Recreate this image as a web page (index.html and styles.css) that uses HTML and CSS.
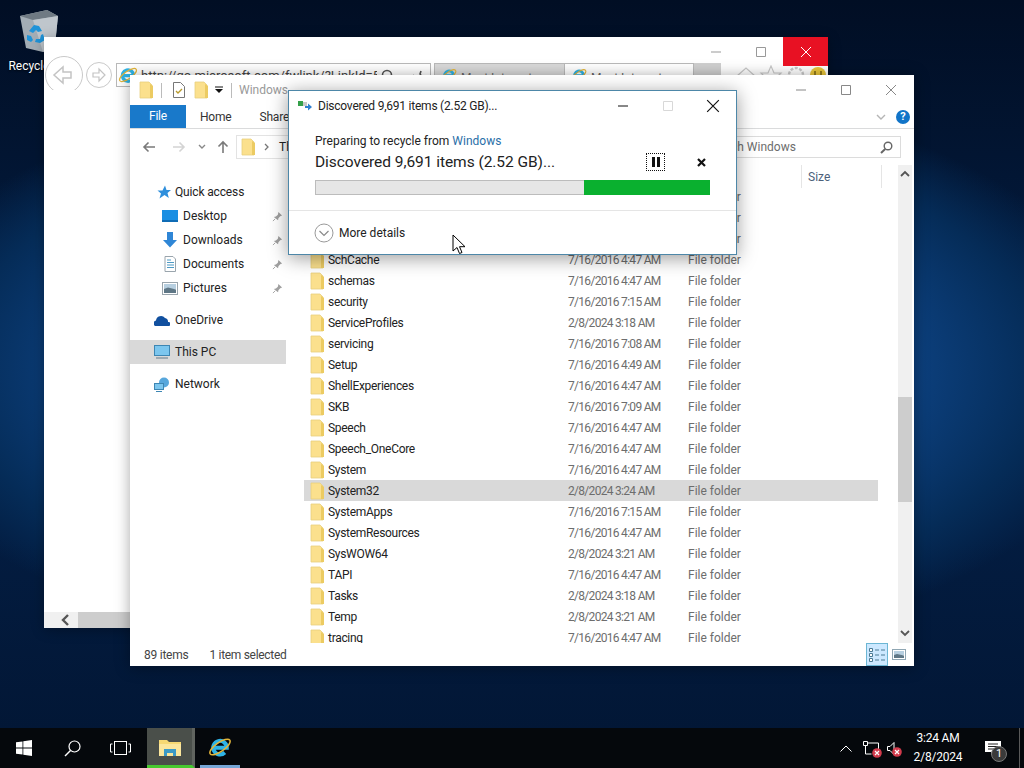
FILE: index.html
```html
<!DOCTYPE html>
<html lang="en">
<head>
    <meta charset="UTF-8">
    <title>Discovered 9,691 items (2.52 GB)...</title>
    <link rel="stylesheet" href="styles.css">
</head>
<body>
    <!-- shared icons -->
    <svg class="defs" width="0" height="0">
        <symbol id="i-folder" viewBox="0 0 16 18">
            <path d="M1 1h9l3 3v13H1z" fill="#fbe08d" stroke="#e9cf7e" stroke-width=".8"/>
            <path d="M11 3l3 2v12h-3z" fill="#eccb62"/>
        </symbol>
        <symbol id="i-min" viewBox="0 0 12 12"><path d="M1 6h10" stroke="currentColor" fill="none"/></symbol>
        <symbol id="i-max" viewBox="0 0 12 12"><path d="M1.5 1.5h9v9h-9z" stroke="currentColor" fill="none"/></symbol>
        <symbol id="i-close" viewBox="0 0 12 12"><path d="M1 1l10 10M11 1L1 11" stroke="currentColor" fill="none"/></symbol>
        <symbol id="i-pin" viewBox="0 0 12 12">
            <path d="M7 1l4 4-2 .6-2 2.2-.4 2.4L2 6.600l2.300-.5L6.400 4z" fill="#a0a0a0"/>
            <path d="M3.500 8.500L1 11" stroke="#a0a0a0"/>
        </symbol>
        <symbol id="i-ie" viewBox="0 0 24 24">
            <path d="M6 12.800H18.800A6.800 6.800 0 1 0 16.800 17.500" fill="none" stroke="#2eb3e6" stroke-width="4"/>
            <ellipse cx="12" cy="12" rx="12" ry="4.500" transform="rotate(-35 12 12)" fill="none" stroke="#e3b53a" stroke-width="1.500"/>
        </symbol>
        <symbol id="i-xbadge" viewBox="0 0 10 10">
            <circle cx="5" cy="5" r="4.800" fill="#d23a4c"/>
            <path d="M3 3l4 4M7 3L3 7" stroke="#fff" stroke-width="1.200"/>
        </symbol>
    </svg>

    <div class="desktop">
        <div class="desktop-icon">
            <svg width="40" height="44" viewBox="0 0 40 44">
                <path d="M1 7L28 1l11 6-3 29-12 7-17-4z" fill="#a3adb5"/>
                <path d="M1 7L28 1l11 6-25 4z" fill="#6f7a83"/>
                <path d="M14 11l25-4-3 29-12 7z" fill="#bfc6cc"/>
                <path d="M10 22l5-6 5 1 3 5-4 1-2-2-3 3zM24 25l2 6-5 3-5-1 1-3 4 0 1-4zM8 26l4 1 2 4-2 2-4-2z" fill="#1f93d8"/>
            </svg>
            <span>Recycle Bin</span>
        </div>

        <!-- Internet Explorer behind everything -->
        <div class="window ie-window">
            <div class="ie-title">
                <div class="win-ctrls">
                    <span class="ctrl"><svg width="12" height="12"><use href="#i-min"/></svg></span>
                    <span class="ctrl"><svg width="12" height="12"><use href="#i-max"/></svg></span>
                    <span class="ctrl ctrl-close"><svg width="12" height="12"><use href="#i-close"/></svg></span>
                </div>
            </div>
            <div class="ie-toolbar">
                <span class="ie-back">
                    <svg width="38" height="38" viewBox="0 0 38 38"><circle cx="19" cy="19" r="18.500" fill="#fff" stroke="#c9c9c9"/><path d="M26 16h-8v-5l-9 8 9 8v-5h8z" fill="#fff" stroke="#c4c4c4" stroke-width="1.500"/></svg>
                </span>
                <span class="ie-fwd">
                    <svg width="26" height="26" viewBox="0 0 26 26"><circle cx="13" cy="13" r="12.500" fill="#fff" stroke="#c9c9c9"/><path d="M7 11h6V7l6 6-6 6v-4H7z" fill="#fff" stroke="#c4c4c4" stroke-width="1.200"/></svg>
                </span>
                <div class="ie-address">
                    <svg width="20" height="20"><use href="#i-ie"/></svg>
                    <span class="ie-url">http://go.microsoft.com/fwlink/?LinkId=517</span>
                    <svg class="ie-addr-tools" width="46" height="14" viewBox="0 0 46 14"><circle cx="7" cy="7" r="4.500" fill="none" stroke="#555" stroke-width="1.600"/><path d="M19 8h5" stroke="#777"/><path d="M34 7a4 4 0 1 0 6-1l1-3" fill="none" stroke="#555" stroke-width="1.600"/></svg>
                </div>
                <div class="ie-tab ie-tab-back">
                    <svg width="16" height="16"><use href="#i-ie"/></svg><span class="ie-tab-text">Meet Internet</span>
                </div>
                <div class="ie-tab">
                    <svg width="16" height="16"><use href="#i-ie"/></svg><span class="ie-tab-text">Meet Internet</span>
                </div>
                <div class="ie-newtab"></div>
                <svg class="ie-tools" width="92" height="20" viewBox="0 0 92 20">
                    <path d="M2 11l9-8 9 8v8H2z" fill="none" stroke="#c8c8c8" stroke-width="1.200"/>
                    <path d="M36 1l3 7h7l-5 5 2 7-7-4-7 4 2-7-5-5h7z" fill="none" stroke="#c8c8c8" stroke-width="1.200"/>
                    <circle cx="61" cy="10" r="7" fill="none" stroke="#c8c8c8" stroke-width="2.400" stroke-dasharray="3 1.500"/>
                    <circle cx="83" cy="10" r="8" fill="#e8c53a"/>
                    <path d="M80 6v4M86 6v4" stroke="#7a6410" stroke-width="1.500"/>
                </svg>
            </div>
            <div class="ie-hscroll">
                <svg width="10" height="12" viewBox="0 0 10 12"><path d="M8 1L3 6l5 5" fill="none" stroke="#555" stroke-width="2.400"/></svg>
                <span class="ie-hthumb"></span>
            </div>
        </div>

        <!-- File Explorer -->
        <div class="window explorer">
            <div class="ex-title">
                <svg class="qa-folder" width="16" height="18"><use href="#i-folder"/></svg>
                <span class="qa-sep"></span>
                <svg class="qa-doc" width="14" height="16" viewBox="0 0 14 16"><path d="M1.500.5h7l4 4v11h-11z" fill="#fff" stroke="#777"/><path d="M4 9l2 2 4-4" fill="none" stroke="#b89a2c" stroke-width="1.300"/></svg>
                <svg class="qa-folder-2" width="16" height="18"><use href="#i-folder"/></svg>
                <svg class="qa-drop" width="8" height="8" viewBox="0 0 8 8"><path d="M0 1h8" stroke="#111"/><path d="M0 3h8L4 7z" fill="#111"/></svg>
                <span class="qa-sep qa-sep-last"></span>
                <span class="ex-name">Windows</span>
                <div class="win-ctrls ex-ctrls">
                    <span class="ctrl"><svg width="12" height="12"><use href="#i-min"/></svg></span>
                    <span class="ctrl"><svg width="12" height="12"><use href="#i-max"/></svg></span>
                    <span class="ctrl"><svg width="12" height="12"><use href="#i-close"/></svg></span>
                </div>
            </div>
            <div class="ex-tabs">
                <span class="tab tab-file">File</span>
                <span class="tab">Home</span>
                <span class="tab">Share</span>
                <svg class="ribbon-chev" width="10" height="6" viewBox="0 0 10 6"><path d="M1 1l4 4 4-4" fill="none" stroke="#b5b5b5" stroke-width="1.400"/></svg>
                <span class="help">?</span>
            </div>
            <div class="ex-address">
                <svg class="nav-btn" width="14" height="12" viewBox="0 0 14 12"><path d="M13 6H2M6.500 1.500L2 6l4.500 4.500" fill="none" stroke="#7a7a7a" stroke-width="1.600"/></svg>
                <svg class="nav-btn nav-fwd" width="14" height="12" viewBox="0 0 14 12"><path d="M1 6h11M7.500 1.500L12 6l-4.500 4.500" fill="none" stroke="#d4d4d4" stroke-width="1.600"/></svg>
                <svg class="nav-btn nav-drop" width="8" height="6" viewBox="0 0 8 6"><path d="M1 1l3 3 3-3" fill="none" stroke="#888" stroke-width="1.400"/></svg>
                <svg class="nav-btn nav-up" width="12" height="14" viewBox="0 0 12 14"><path d="M6 13V2M1.500 6.500L6 2l4.500 4.500" fill="none" stroke="#7a7a7a" stroke-width="1.600"/></svg>
                <div class="path-box">
                    <svg width="16" height="18"><use href="#i-folder"/></svg>
                    <svg class="path-chev" width="6" height="8" viewBox="0 0 6 8"><path d="M1 1l3 3-3 3" fill="none" stroke="#777" stroke-width="1.300"/></svg>
                    <span>This PC</span>
                </div>
                <div class="search-box">
                    <span>Search Windows</span>
                    <svg width="13" height="13" viewBox="0 0 13 13"><circle cx="8" cy="5" r="3.800" fill="none" stroke="#666" stroke-width="1.400"/><path d="M5.200 8L1 12" stroke="#666" stroke-width="2"/></svg>
                </div>
            </div>
            <div class="ex-body">
                <nav class="nav-pane">
                    <div class="nav-item nav-quick">
                        <svg width="14" height="14" viewBox="0 0 14 14"><path d="M8 .5l1.500 4.500H14l-3.500 3 1.300 5L7.500 10 2.500 13.500 4 8.500.5 5.500h5z" fill="#2f8fdc"/></svg>
                        <span>Quick access</span>
                    </div>
                    <div class="nav-item nav-sub">
                        <svg width="16" height="12" viewBox="0 0 16 12"><rect width="16" height="11" fill="#1a8fe3"/><rect y="10" width="16" height="2" fill="#0f6cb5"/></svg>
                        <span>Desktop</span>
                        <svg class="pin" width="11" height="11"><use href="#i-pin"/></svg>
                    </div>
                    <div class="nav-item nav-sub">
                        <svg width="16" height="16" viewBox="0 0 16 16"><path d="M5 0h6v8h4l-7 7.500L1 8h4z" fill="#2f86d6"/></svg>
                        <span>Downloads</span>
                        <svg class="pin" width="11" height="11"><use href="#i-pin"/></svg>
                    </div>
                    <div class="nav-item nav-sub">
                        <svg width="16" height="16" viewBox="0 0 16 16"><path d="M3 .5h8l2.500 2.500v12.500H3z" fill="#fff" stroke="#9aa5ad"/><path d="M5 4h4M5 6.500h7M5 9h7M5 11.500h7" stroke="#4f9ac4"/></svg>
                        <span>Documents</span>
                        <svg class="pin" width="11" height="11"><use href="#i-pin"/></svg>
                    </div>
                    <div class="nav-item nav-sub">
                        <svg width="16" height="13" viewBox="0 0 16 13"><rect x=".5" y=".5" width="15" height="12" fill="#fff" stroke="#9aa5ad"/><rect x="2" y="2" width="12" height="5" fill="#b7cfe0"/><path d="M2 7l4-1.500 8 2V11H2z" fill="#5f7786"/></svg>
                        <span>Pictures</span>
                        <svg class="pin" width="11" height="11"><use href="#i-pin"/></svg>
                    </div>
                    <div class="nav-item nav-group">
                        <svg width="16" height="11" viewBox="0 0 16 11"><path d="M1 11a3 3 0 0 1 1-5.500A5 5 0 0 1 11 3a3.800 3.800 0 0 1 3 4 2 2 0 0 1 1 4z" fill="#11509f"/></svg>
                        <span>OneDrive</span>
                    </div>
                    <div class="nav-item nav-group nav-selected">
                        <svg width="16" height="14" viewBox="0 0 16 14"><rect x=".5" y=".5" width="15" height="10" fill="#7cc6ee" stroke="#3d86b3"/><path d="M2 13h12" stroke="#8a9aa5" stroke-width="1.500"/></svg>
                        <span>This PC</span>
                    </div>
                    <div class="nav-item nav-group">
                        <svg width="16" height="15" viewBox="0 0 16 15"><circle cx="10" cy="5.500" r="5" fill="#57a7dc"/><rect x=".5" y="6.500" width="9" height="6" fill="#7cc6ee" stroke="#3d86b3"/><path d="M2 14.500h6" stroke="#3d86b3"/></svg>
                        <span>Network</span>
                    </div>
                </nav>
                <div class="main-pane">
                    <div class="file-area">
                        <div class="list-head"><span class="col-size">Size</span></div>
                        <!-- first three rows sit behind the dialog, only the end of the type column shows -->
                        <div class="file-row file-row-hidden"><span class="f-meta">File folder</span></div>
                        <div class="file-row file-row-hidden"><span class="f-meta">File folder</span></div>
                        <div class="file-row file-row-hidden"><span class="f-meta">File folder</span></div>
                        <div class="file-row"><svg width="16" height="18"><use href="#i-folder"/></svg><span class="f-name">SchCache</span><span class="f-date">7/16/2016 4:47 AM</span><span class="f-meta">File folder</span></div>
                        <div class="file-row"><svg width="16" height="18"><use href="#i-folder"/></svg><span class="f-name">schemas</span><span class="f-date">7/16/2016 4:47 AM</span><span class="f-meta">File folder</span></div>
                        <div class="file-row"><svg width="16" height="18"><use href="#i-folder"/></svg><span class="f-name">security</span><span class="f-date">7/16/2016 7:15 AM</span><span class="f-meta">File folder</span></div>
                        <div class="file-row"><svg width="16" height="18"><use href="#i-folder"/></svg><span class="f-name">ServiceProfiles</span><span class="f-date">2/8/2024 3:18 AM</span><span class="f-meta">File folder</span></div>
                        <div class="file-row"><svg width="16" height="18"><use href="#i-folder"/></svg><span class="f-name">servicing</span><span class="f-date">7/16/2016 7:08 AM</span><span class="f-meta">File folder</span></div>
                        <div class="file-row"><svg width="16" height="18"><use href="#i-folder"/></svg><span class="f-name">Setup</span><span class="f-date">7/16/2016 4:49 AM</span><span class="f-meta">File folder</span></div>
                        <div class="file-row"><svg width="16" height="18"><use href="#i-folder"/></svg><span class="f-name">ShellExperiences</span><span class="f-date">7/16/2016 4:47 AM</span><span class="f-meta">File folder</span></div>
                        <div class="file-row"><svg width="16" height="18"><use href="#i-folder"/></svg><span class="f-name">SKB</span><span class="f-date">7/16/2016 7:09 AM</span><span class="f-meta">File folder</span></div>
                        <div class="file-row"><svg width="16" height="18"><use href="#i-folder"/></svg><span class="f-name">Speech</span><span class="f-date">7/16/2016 4:47 AM</span><span class="f-meta">File folder</span></div>
                        <div class="file-row"><svg width="16" height="18"><use href="#i-folder"/></svg><span class="f-name">Speech_OneCore</span><span class="f-date">7/16/2016 4:47 AM</span><span class="f-meta">File folder</span></div>
                        <div class="file-row"><svg width="16" height="18"><use href="#i-folder"/></svg><span class="f-name">System</span><span class="f-date">7/16/2016 4:47 AM</span><span class="f-meta">File folder</span></div>
                        <div class="file-row file-selected"><svg width="16" height="18"><use href="#i-folder"/></svg><span class="f-name">System32</span><span class="f-date">2/8/2024 3:24 AM</span><span class="f-meta">File folder</span></div>
                        <div class="file-row"><svg width="16" height="18"><use href="#i-folder"/></svg><span class="f-name">SystemApps</span><span class="f-date">7/16/2016 7:15 AM</span><span class="f-meta">File folder</span></div>
                        <div class="file-row"><svg width="16" height="18"><use href="#i-folder"/></svg><span class="f-name">SystemResources</span><span class="f-date">7/16/2016 4:47 AM</span><span class="f-meta">File folder</span></div>
                        <div class="file-row"><svg width="16" height="18"><use href="#i-folder"/></svg><span class="f-name">SysWOW64</span><span class="f-date">2/8/2024 3:21 AM</span><span class="f-meta">File folder</span></div>
                        <div class="file-row"><svg width="16" height="18"><use href="#i-folder"/></svg><span class="f-name">TAPI</span><span class="f-date">7/16/2016 4:47 AM</span><span class="f-meta">File folder</span></div>
                        <div class="file-row"><svg width="16" height="18"><use href="#i-folder"/></svg><span class="f-name">Tasks</span><span class="f-date">2/8/2024 3:18 AM</span><span class="f-meta">File folder</span></div>
                        <div class="file-row"><svg width="16" height="18"><use href="#i-folder"/></svg><span class="f-name">Temp</span><span class="f-date">2/8/2024 3:21 AM</span><span class="f-meta">File folder</span></div>
                        <div class="file-row"><svg width="16" height="18"><use href="#i-folder"/></svg><span class="f-name">tracing</span><span class="f-date">7/16/2016 4:47 AM</span><span class="f-meta">File folder</span></div>
                    </div>
                    <div class="vscroll">
                        <svg width="10" height="7" viewBox="0 0 10 7"><path d="M1 6l4-4 4 4" fill="none" stroke="#555" stroke-width="1.800"/></svg>
                        <span class="vthumb"></span>
                        <svg width="10" height="7" viewBox="0 0 10 7"><path d="M1 1l4 4 4-4" fill="none" stroke="#555" stroke-width="1.800"/></svg>
                    </div>
                </div>
            </div>
            <div class="ex-status">
                <span class="status-count">89 items</span>
                <span class="status-sel">1 item selected</span>
                <span class="view-btn view-on">
                    <svg width="16" height="14" viewBox="0 0 16 14"><path d="M.5.5h3v3h-3zM.5 5.500h3v3h-3zM.5 10.500h3v3h-3z" fill="#fff" stroke="#4b7a94"/><path d="M6 2h4M12 2h4M6 7h4M12 7h4M6 12h4M12 12h4" stroke="#4b7a94"/></svg>
                </span>
                <span class="view-btn">
                    <svg width="14" height="11" viewBox="0 0 14 11"><rect x=".5" y=".5" width="13" height="10" fill="#fff" stroke="#8fa6b3"/><rect x="2" y="2" width="10" height="4" fill="#b7cfe0"/><path d="M2 6l3-1 7 1.500V9H2z" fill="#5f7786"/></svg>
                </span>
            </div>
        </div>

        <!-- Recycle progress dialog -->
        <div class="window dialog">
            <div class="dlg-title">
                <svg width="14" height="10" viewBox="0 0 14 10"><rect y="0" width="5" height="5" fill="#35a04a"/><rect x="5" y="1" width="4" height="4" fill="#c9c9c9"/><path d="M7 5h3V2.500L14 6l-4 3.500V7H7z" fill="#2f7fd0"/></svg>
                <span class="dlg-caption">Discovered 9,691 items (2.52 GB)...</span>
                <div class="win-ctrls dlg-ctrls">
                    <span class="ctrl"><svg width="12" height="12"><use href="#i-min"/></svg></span>
                    <span class="ctrl ctrl-off"><svg width="12" height="12"><use href="#i-max"/></svg></span>
                    <span class="ctrl"><svg width="14" height="14"><use href="#i-close"/></svg></span>
                </div>
            </div>
            <div class="dlg-body">
                <div class="dlg-from">Preparing to recycle from <span class="dlg-link">Windows</span></div>
                <div class="dlg-status">
                    <span class="dlg-big">Discovered 9,691 items (2.52 GB)...</span>
                    <span class="pause-btn"><svg width="8" height="10" viewBox="0 0 8 10"><path d="M0 0h3v10H0zM5 0h3v10H5z" fill="#111"/></svg></span>
                    <svg class="cancel-btn" width="9" height="9" viewBox="0 0 9 9"><path d="M1 1l7 7M8 1L1 8" stroke="#111" stroke-width="2.200"/></svg>
                </div>
                <div class="progress"><span class="progress-bar"></span></div>
            </div>
            <div class="dlg-foot">
                <svg width="20" height="20" viewBox="0 0 20 20"><circle cx="10" cy="10" r="9" fill="#fff" stroke="#9a9a9a"/><path d="M5.500 8l4.500 4.500L14.500 8" fill="none" stroke="#8a8a8a" stroke-width="1.200"/></svg>
                <span>More details</span>
            </div>
        </div>

        <svg class="cursor" width="14" height="20" viewBox="0 0 14 20"><path d="M1 1v16l4-3.500 2.500 6 2.500-1-2.500-5.800H13z" fill="#fff" stroke="#000"/></svg>

        <div class="taskbar">
            <span class="task-btn">
                <svg width="16" height="16" viewBox="0 0 16 16"><path d="M0 2.300l6.500-.9v6.200H0zM7.300 1.300L16 0v7.600H7.300zM0 8.400h6.500v6.200L0 13.700zM7.300 8.400H16V16l-8.700-1.300z" fill="#fff"/></svg>
            </span>
            <span class="task-btn">
                <svg width="17" height="17" viewBox="0 0 17 17"><circle cx="10.500" cy="6.500" r="5.500" fill="none" stroke="#fff" stroke-width="1.200"/><path d="M6.500 10.500L1 16" stroke="#fff" stroke-width="1.400"/></svg>
            </span>
            <span class="task-btn">
                <svg width="21" height="14" viewBox="0 0 21 14"><rect x="4.500" y=".5" width="12" height="13" fill="none" stroke="#fff"/><path d="M2.500 3H.5v8h2M18.500 3h2v8h-2" fill="none" stroke="#fff"/></svg>
            </span>
            <span class="task-app task-app-open">
                <svg width="22" height="18" viewBox="0 0 22 18"><path d="M0 2h8l2 2h12v14H0z" fill="#f6d873"/><path d="M0 6h22v12H0z" fill="#fbe69c"/><path d="M5 18v-7h12v7h-3v-3H8v3z" fill="#3c9ac6"/></svg>
            </span>
            <span class="task-app task-app-run">
                <svg width="24" height="24"><use href="#i-ie"/></svg>
            </span>
            <div class="tray">
                <svg width="12" height="7" viewBox="0 0 12 7"><path d="M.5 6.500l5.500-5.500 5.500 5.500" fill="none" stroke="#fff"/></svg>
                <span class="tray-icon tray-net">
                    <svg width="16" height="15" viewBox="0 0 16 15"><path d="M.5.5h4v4h-4zM2.500 4.500V13h6M4.500 2H15.500v9" fill="none" stroke="#fff"/></svg>
                    <svg class="tray-x" width="10" height="10"><use href="#i-xbadge"/></svg>
                </span>
                <span class="tray-icon tray-vol">
                    <svg width="9" height="13" viewBox="0 0 9 13"><path d="M.5 4.500h2.500l4-4v12l-4-4H.5z" fill="none" stroke="#fff"/></svg>
                    <svg class="tray-x" width="10" height="10"><use href="#i-xbadge"/></svg>
                </span>
                <div class="clock"><span>3:24 AM</span><span>2/8/2024</span></div>
                <span class="notify">
                    <svg width="16" height="14" viewBox="0 0 16 14"><path d="M0 0h16v11H9l-3 3v-3H0z" fill="#fff"/><path d="M3 3h10M3 5.500h10M3 8h7" stroke="#222"/></svg>
                    <span class="notify-badge">1</span>
                </span>
                <span class="show-desktop"></span>
            </div>
        </div>
    </div>
</body>
</html>
```

FILE: styles.css
```css
html, body {
    margin: 0;
    height: 100%;
    overflow: hidden;
}

body {
    font-family: Roboto, "Noto Sans", sans-serif;
    font-size: 12px;
    color: #222;
}

svg {
    display: block;
    flex-shrink: 0;
}

.defs {
    position: absolute;
}

.desktop {
    position: relative;
    width: 1024px;
    height: 768px;
    overflow: hidden;
    background:
        radial-gradient(ellipse 640px 300px at 500px 370px, #0c3f7c 0%, #0c3f7c 65%, #052c58 85%, rgba(5, 44, 88, 0) 100%),
        linear-gradient(#010e24 0%, #031c40 40%, #031c40 70%, #021634 100%);
}

.desktop-icon {
    position: absolute;
    left: 0;
    top: 9px;
    width: 78px;
    display: flex;
    flex-direction: column;
    align-items: center;
    color: #fff;
    font-size: 12px;
    gap: 6px;
    text-shadow: 0 1px 2px rgba(0, 0, 0, .8);
}

.window {
    position: absolute;
    background: #fff;
    display: flex;
    flex-direction: column;
}

.win-ctrls {
    display: flex;
    margin-left: auto;
}

.ctrl {
    width: 45px;
    display: flex;
    align-items: center;
    justify-content: center;
}

/* IE */
.ie-window {
    left: 44px;
    top: 37px;
    width: 784px;
    height: 591px;
    box-shadow: 0 2px 12px rgba(0, 0, 0, .3);
}

.ie-title {
    display: flex;
    height: 19px;
}

.ie-title .win-ctrls {
    height: 29px;
    color: #999;
    z-index: 1;
}

.ctrl-close {
    background: #e81123;
    color: #fff;
}

.ie-toolbar {
    display: flex;
    align-items: flex-start;
    height: 34px;
    overflow: hidden;
    padding-left: 1px;
}

.ie-fwd {
    margin: 6px 0 0 3px;
}

.ie-address {
    display: flex;
    align-items: center;
    gap: 3px;
    box-sizing: border-box;
    width: 315px;
    height: 24px;
    margin: 7px 0 0 4px;
    padding: 0 4px 0 1px;
    border: 1px solid #b9b9b9;
    color: #444;
    font-size: 13px;
}

.ie-url {
    white-space: nowrap;
    overflow: hidden;
    flex: 1;
}

.ie-tab {
    display: flex;
    align-items: center;
    gap: 4px;
    box-sizing: border-box;
    width: 129px;
    height: 24px;
    margin-top: 7px;
    padding-left: 6px;
    border: 1px solid #b9b9b9;
    border-left: none;
    color: #666;
}

.ie-tab-text {
    padding-top: 5px;
}

.ie-tab-back {
    width: 131px;
    margin-left: 3px;
    border-left: 1px solid #b9b9b9;
    background: #d9d9d9;
}

.ie-newtab {
    width: 27px;
    height: 24px;
    margin-top: 7px;
    background: #cfcfcf;
}

.ie-tools {
    margin: 9px 0 0 14px;
}

.ie-hscroll {
    display: flex;
    align-items: center;
    height: 16px;
    margin-top: auto;
    background: #f0f0f0;
    padding-left: 16px;
}

.ie-hthumb {
    width: 60px;
    height: 16px;
    margin-left: 8px;
    background: #cdcdcd;
}

/* Explorer */
.explorer {
    left: 130px;
    top: 75px;
    width: 784px;
    height: 591px;
    box-shadow: 0 1px 14px rgba(0, 0, 0, .35);
}

.ex-title {
    display: flex;
    align-items: center;
    height: 30px;
    padding-left: 9px;
    color: #999;
}

.qa-folder {
    margin-right: 6px;
}

.qa-sep {
    width: 1px;
    height: 15px;
    background: #bbb;
    margin-right: 10px;
}

.qa-sep-last {
    margin-right: 7px;
}

.qa-doc {
    margin-right: 8px;
}

.qa-folder-2 {
    margin-right: 5px;
}

.qa-drop {
    margin-right: 8px;
}

.ex-ctrls {
    color: #888;
    height: 30px;
    margin-right: 1px;
}

.ex-tabs {
    display: flex;
    align-items: center;
    height: 23px;
    border-bottom: 1px solid #dadbdc;
    padding-right: 4px;
}

.tab {
    padding: 0 14px;
    color: #333;
    letter-spacing: -.2px;
}

.tab-file {
    width: 56px;
    box-sizing: border-box;
    height: 23px;
    line-height: 22px;
    text-align: center;
    padding: 0;
    background: #1979ca;
    color: #fff;
}

.ribbon-chev {
    margin-left: auto;
    margin-right: 10px;
}

.help {
    width: 14px;
    height: 14px;
    border-radius: 50%;
    background: #1174c8;
    color: #fff;
    font-size: 11px;
    font-weight: 700;
    line-height: 14px;
    text-align: center;
}

.ex-address {
    display: flex;
    align-items: center;
    height: 36px;
    padding: 0 13px 0 12px;
}

.nav-fwd {
    margin-left: 16px;
}

.nav-drop {
    margin-left: 12px;
}

.nav-up {
    margin-left: 11px;
}

.path-box {
    display: flex;
    align-items: center;
    gap: 6px;
    flex: 1;
    height: 22px;
    margin-left: 7px;
    padding-left: 4px;
    border: 1px solid #e3e3e3;
}

.path-chev {
    margin: 0 3px 0 1px;
}

.search-box {
    display: flex;
    align-items: center;
    justify-content: space-between;
    box-sizing: border-box;
    width: 197px;
    height: 22px;
    margin-left: 4px;
    padding: 0 7px 0 2px;
    border: 1px solid #dcdcdc;
    color: #6d6d6d;
}

.ex-body {
    display: flex;
    height: 478px;
}

.nav-pane {
    width: 156px;
    padding-top: 15px;
}

.nav-item {
    display: flex;
    align-items: center;
    height: 24px;
    padding-left: 24px;
    gap: 5px;
}

.nav-quick {
    padding-left: 27px;
    gap: 4px;
    letter-spacing: -.15px;
}

.nav-sub {
    padding-left: 32px;
}

.nav-group {
    margin-top: 8px;
}

.nav-selected {
    background: #d9d9d9;
}

.pin {
    margin-left: auto;
    margin-right: 3px;
}

.main-pane {
    flex: 1;
    display: flex;
    padding-left: 18px;
}

.file-area {
    flex: 1;
    overflow: hidden;
    padding-right: 20px;
}

.list-head {
    display: flex;
    justify-content: flex-end;
    height: 21px;
    margin-right: -4px;
}

.col-size {
    box-sizing: border-box;
    width: 81px;
    height: 23px;
    padding-left: 6px;
    line-height: 25px;
    border: solid #e5e5e5;
    border-width: 0 1px;
    color: #4c607a;
}

.file-row {
    display: grid;
    grid-template-columns: 18px 240px 120px 1fr;
    align-items: center;
    height: 21px;
    padding-left: 6px;
}

.file-row-hidden {
    grid-template-columns: 1fr;
    padding-left: 384px;
}

.file-selected {
    background: #d9d9d9;
}

.f-name {
    letter-spacing: -.3px;
}

.f-date {
    color: #6d6d6d;
    letter-spacing: -.7px;
}

.f-meta {
    color: #6d6d6d;
}

.vscroll {
    display: flex;
    flex-direction: column;
    align-items: center;
    width: 14px;
    margin-right: 2px;
    padding-top: 5px;
    box-sizing: border-box;
    background: #f0f0f0;
}

.vthumb {
    width: 14px;
    height: 105px;
    margin: 220px 0 128px;
    background: #cdcdcd;
}

.ex-status {
    display: flex;
    align-items: center;
    height: 23px;
    padding-left: 14px;
    color: #444;
    margin-top: auto;
    letter-spacing: -.25px;
}

.status-count {
    margin-right: 21px;
}

.status-sel {
    letter-spacing: -.3px;
}

.view-btn {
    display: flex;
    align-items: center;
    justify-content: center;
    width: 22px;
    height: 23px;
    box-sizing: border-box;
    margin-right: 4px;
}

.view-on {
    margin-left: auto;
    margin-right: 0;
    background: #cce8ff;
    border: 1px solid #6cb6d4;
}

/* Dialog */
.dialog {
    left: 288px;
    top: 90px;
    width: 449px;
    height: 165px;
    box-sizing: border-box;
    border: 1px solid #4d87a8;
    box-shadow: 0 3px 18px rgba(0, 0, 0, .4);
}

.dlg-title {
    display: flex;
    align-items: center;
    height: 30px;
    padding-left: 9px;
    color: #222;
}

.dlg-caption {
    margin-left: 6px;
    letter-spacing: -.23px;
}

.dlg-ctrls {
    margin-right: 1px;
    color: #111;
}

.ctrl-off {
    color: #d8d8d8;
}

.dlg-body {
    padding: 10px 26px 0;
    height: 89px;
    box-sizing: border-box;
}

.dlg-from {
    line-height: 20px;
}

.dlg-link {
    color: #2a6fa8;
}

.dlg-status {
    display: flex;
    align-items: center;
    height: 20px;
    margin-top: 1px;
}

.dlg-big {
    font-size: 15.500px;
    letter-spacing: -.05px;
    flex: 1;
}

.pause-btn {
    display: flex;
    align-items: center;
    justify-content: center;
    box-sizing: border-box;
    width: 19px;
    height: 18px;
    border: 1px dotted #111;
}

.cancel-btn {
    margin: 0 4px 0 32px;
}

.progress {
    display: flex;
    justify-content: flex-end;
    height: 15px;
    margin-top: 8px;
    box-sizing: border-box;
    background: #e6e6e6;
    border: 1px solid #bcbcbc;
}

.progress-bar {
    width: 126px;
    margin: -1px;
    background: #0ab02f;
}

.dlg-foot {
    display: flex;
    align-items: center;
    gap: 5px;
    flex: 1;
    padding-left: 25px;
    border-top: 1px solid #e5e5e5;
}

.cursor {
    position: absolute;
    left: 452px;
    top: 234px;
}

/* Taskbar */
.taskbar {
    position: absolute;
    left: 0;
    right: 0;
    bottom: 0;
    height: 40px;
    display: flex;
    background: #05080c;
    color: #fff;
}

.task-btn {
    width: 48px;
    display: flex;
    align-items: center;
    justify-content: center;
}

.task-app {
    width: 48px;
    display: flex;
    align-items: center;
    justify-content: center;
    box-sizing: border-box;
}

.task-app-open {
    margin-left: 3px;
    background: #4a4f4a;
    border-bottom: 3px solid #47c92f;
    border-right: 3px solid #60645f;
}

.task-app-run {
    margin-left: 5px;
    width: 40px;
    border-bottom: 3px solid #76a6d6;
}

.tray {
    display: flex;
    align-items: center;
    margin-left: auto;
}

.tray-icon {
    position: relative;
    display: block;
    margin-left: 11px;
}

.tray-x {
    position: absolute;
    right: -3px;
    bottom: -2px;
}

.tray-vol {
    margin-left: 8px;
    margin-right: 8px;
}

.tray-vol .tray-x {
    right: -6px;
}

.clock {
    display: flex;
    flex-direction: column;
    align-items: center;
    width: 68px;
    line-height: 19px;
    font-size: 12px;
    letter-spacing: -.2px;
}

.notify {
    position: relative;
    margin: 0 18px 0 13px;
}

.notify-badge {
    position: absolute;
    left: 6px;
    top: 5px;
    width: 16px;
    height: 16px;
    border-radius: 50%;
    background: #3a3a3a;
    border: 1px solid #777;
    box-sizing: border-box;
    font-size: 11px;
    line-height: 14px;
    text-align: center;
}

.show-desktop {
    width: 1px;
    height: 40px;
    background: #5a5a5a;
    margin-right: 4px;
}
```
